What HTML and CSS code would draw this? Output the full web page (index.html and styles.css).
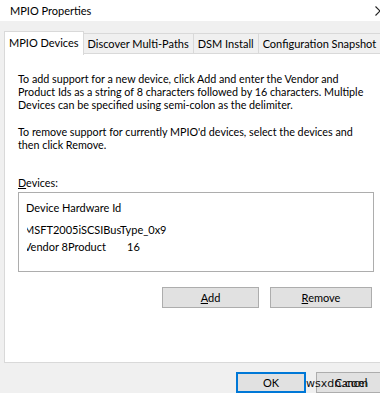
FILE: index.html
```html
<!DOCTYPE html>
<html lang="en">
<head>
    <meta charset="UTF-8">
    <title>MPIO Properties</title>
    <link rel="stylesheet" href="styles.css">
</head>
<body>
    <div class="window">
        <div class="titlebar">
            <span class="title">MPIO Properties</span>
            <svg class="close" width="10" height="10" viewBox="0 0 10 10">
                <path d="M0.5 0.5 L9.5 9.5 M9.5 0.5 L0.5 9.5" stroke="#222" stroke-width="1.1" fill="none"/>
            </svg>
        </div>

        <div class="tabs">
            <div class="tab active">MPIO Devices</div>
            <div class="tab">Discover Multi-Paths</div>
            <div class="tab">DSM Install</div>
            <div class="tab">Configuration Snapshot</div>
        </div>

        <div class="panel">
            <p class="info">To add support for a new device, click Add and enter the Vendor and<br>Product Ids as a string of 8 characters followed by 16 characters. Multiple<br>Devices can be specified using semi-colon as the delimiter.</p>
            <p class="info">To remove support for currently MPIO'd devices, select the devices and<br>then click Remove.</p>

            <div class="label"><u>D</u>evices:</div>
            <div class="devices">
                <div class="devices-head">Device Hardware Id</div>
                <div class="devices-body">
                    <div class="device">MSFT2005iSCSIBusType_0x9</div>
                    <div class="device"><span class="vendor">Vendor 8Product</span>16</div>
                </div>
            </div>

            <div class="panel-buttons">
                <button class="btn wide"><u>A</u>dd</button>
                <button class="btn wide"><u>R</u>emove</button>
            </div>
        </div>

        <div class="footer">
            <button class="btn ok">OK</button>
            <button class="btn cancel">Cancel</button>
            <span class="watermark">wsxdn.com</span>
        </div>
    </div>
</body>
</html>
```

FILE: styles.css
```css
body {
    margin: 0;
    padding: 0;
    font-family: Lato, "Noto Sans", sans-serif;
    color: #000;
    background: #f0f0f0;
    overflow: hidden;
}

.window {
    width: 380px;
    height: 393px;
    overflow: hidden;
    position: relative;
}

.titlebar {
    height: 21px;
    background: #fff;
    display: flex;
    align-items: center;
    justify-content: space-between;
    padding-left: 10px;
}

.title {
    font-size: 11px;
    color: #000;
}

.close {
    margin-right: -5px;
    flex-shrink: 0;
}

.tabs {
    display: flex;
    padding-left: 5px;
    margin-top: 12px;
    height: 20px;
    position: relative;
    z-index: 1;
}

.tab {
    font-size: 11px;
    line-height: 19px;
    padding: 0 4px;
    border: 1px solid #d9d9d9;
    border-bottom: none;
    margin-left: -1px;
    background: #f0f0f0;
    white-space: nowrap;
}

.tab.active {
    background: #fff;
    margin-top: -2px;
    height: 23px;
    padding: 0 4px;
    line-height: 21px;
}

.panel {
    background: #fff;
    border: 1px solid #d9d9d9;
    margin-left: 4px;
    margin-right: -4px;
    height: 308px;
    padding: 0 13px;
}

.info {
    font-size: 10.75px;
    line-height: 13px;
    white-space: nowrap;
    margin: 18px 0 0;
}

.info + .info {
    margin-top: 14px;
}

.label {
    font-size: 10.75px;
    margin-top: 25px;
}

.devices {
    box-sizing: border-box;
    margin-top: 3px;
    border: 1px solid #adadad;
    height: 80px;
    margin-right: -4px;
    padding: 7px 0 0 7px;
    font-size: 11px;
    line-height: 15px;
}

.devices-body {
    overflow: hidden;
    margin-top: 7px;
    margin-left: 1px;
}

.device {
    margin-left: -3px;
    margin-bottom: 2px;
    white-space: nowrap;
}

.vendor {
    display: inline-block;
    width: 103px;
}

.panel-buttons {
    display: flex;
    justify-content: flex-end;
    gap: 11px;
    margin-top: 15px;
    margin-right: -2px;
}

.btn {
    font-family: inherit;
    font-size: 11px;
    color: #000;
    background: #e1e1e1;
    border: 1px solid #adadad;
    height: 21px;
    padding: 0;
}

.btn.wide {
    width: 97px;
}

.btn.wide:last-child {
    width: 102px;
}

.footer {
    display: flex;
    justify-content: flex-end;
    gap: 10px;
    margin-top: 9px;
    margin-right: -6px;
}

.btn.ok {
    width: 70px;
    border: 2px solid #0078d7;
}

.btn.cancel {
    width: 70px;
}

.watermark {
    position: absolute;
    left: 306px;
    bottom: 3px;
    font-family: "DejaVu Sans", sans-serif;
    font-size: 11px;
    color: #111;
}
```
